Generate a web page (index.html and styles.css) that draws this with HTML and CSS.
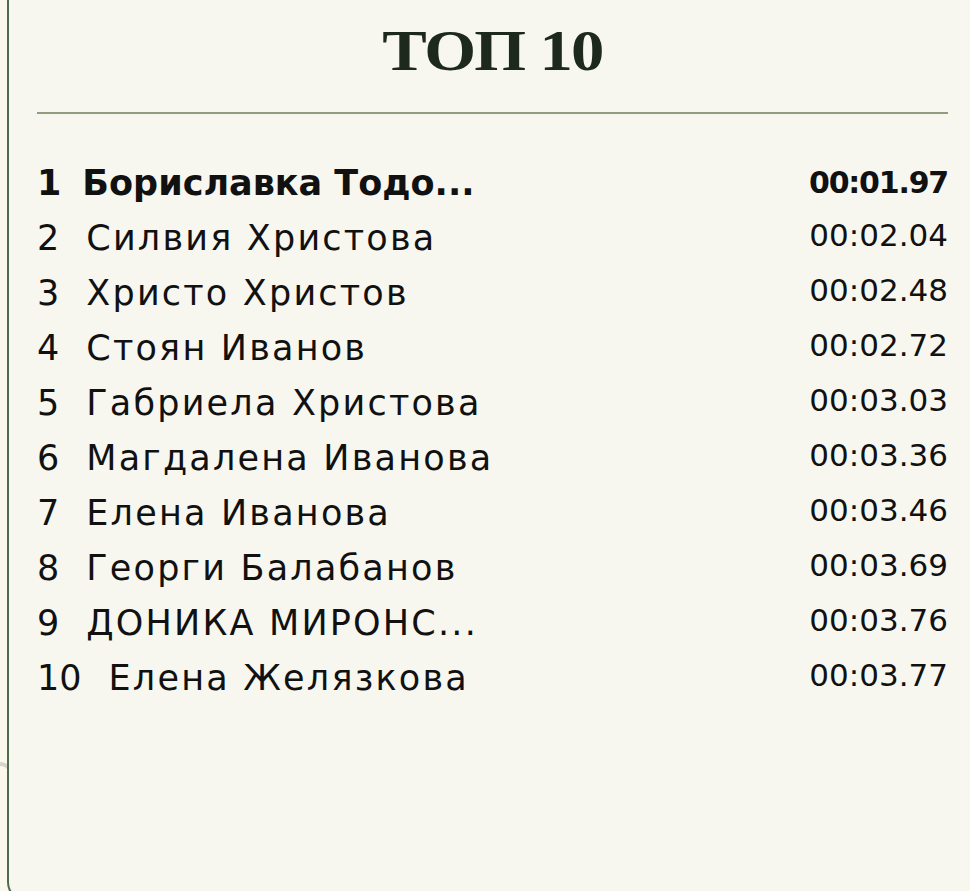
FILE: index.html
```html
<!DOCTYPE html>
<html lang="bg">
<head>
<meta charset="utf-8">
<title>ТОП 10</title>
<link rel="stylesheet" href="styles.css">
</head>
<body>
<div class="deco"></div>
<section class="card">
  <h1 class="title">ТОП 10</h1>
  <hr class="rule">
  <ol class="list">
    <li class="row top"><span class="num">1</span><span class="name">Бориславка Тодо...</span><span class="time">00:01.97</span></li>
    <li class="row"><span class="num">2</span><span class="name">Силвия Христова</span><span class="time">00:02.04</span></li>
    <li class="row"><span class="num">3</span><span class="name">Христо Христов</span><span class="time">00:02.48</span></li>
    <li class="row"><span class="num">4</span><span class="name">Стоян Иванов</span><span class="time">00:02.72</span></li>
    <li class="row"><span class="num">5</span><span class="name">Габриела Христова</span><span class="time">00:03.03</span></li>
    <li class="row"><span class="num">6</span><span class="name">Магдалена Иванова</span><span class="time">00:03.36</span></li>
    <li class="row"><span class="num">7</span><span class="name">Елена Иванова</span><span class="time">00:03.46</span></li>
    <li class="row"><span class="num">8</span><span class="name">Георги Балабанов</span><span class="time">00:03.69</span></li>
    <li class="row"><span class="num">9</span><span class="name">ДОНИКА МИРОНС...</span><span class="time">00:03.76</span></li>
    <li class="row"><span class="num">10</span><span class="name">Елена Желязкова</span><span class="time">00:03.77</span></li>
  </ol>
</section>
</body>
</html>
```
FILE: styles.css
```css
html, body {
  margin: 0;
  padding: 0;
  height: 100%;
  overflow: hidden;
}
body {
  background: #fcf8ec;
  position: relative;
}
.deco {
  position: absolute;
  left: -14px;
  top: 762px;
  width: 20px;
  height: 22px;
  border: 4px solid #d6d5cd;
  border-radius: 50%;
  border-left-color: transparent;
  border-bottom-color: transparent;
}
.card {
  margin-left: 7px;
  height: 902px;
  box-sizing: border-box;
  background: #f7f7f0;
  border-left: 2px solid #4f6a4e;
  border-bottom: 2px solid #4f6a4e;
  border-bottom-left-radius: 20px;
  padding: 22px 22px 0 28px;
  position: relative;
  z-index: 1;
}
.title {
  margin: 0;
  text-align: center;
  font-family: "Liberation Serif", serif;
  font-weight: 700;
  font-size: 58px;
  line-height: 58px;
  color: #1d291d;
  transform: scaleX(1.15);
  letter-spacing: -1.5px;
}
.rule {
  margin: 32px 0 0 0;
  border: 0;
  height: 2px;
  background: #929c7e;
}
.list {
  list-style: none;
  margin: 42px 0 0 0;
  padding: 0;
  font-family: "DejaVu Sans", sans-serif;
  color: #111;
}
.row {
  display: flex;
  align-items: baseline;
  height: 55px;
  line-height: 55px;
  font-size: 35px;
  letter-spacing: 2.2px;
}
.num {
  letter-spacing: 0;
  margin-right: 27px;
}
.name {
  flex: 1;
  white-space: nowrap;
}
.time {
  font-size: 31px;
  letter-spacing: 0;
  position: relative;
  top: -4px;
}
.top {
  font-weight: 700;
  letter-spacing: 0;
}
.top .num {
  margin-right: 21px;
}
.top .time {
  font-size: 30px;
  letter-spacing: -1.2px;
  top: -2px;
}
```
